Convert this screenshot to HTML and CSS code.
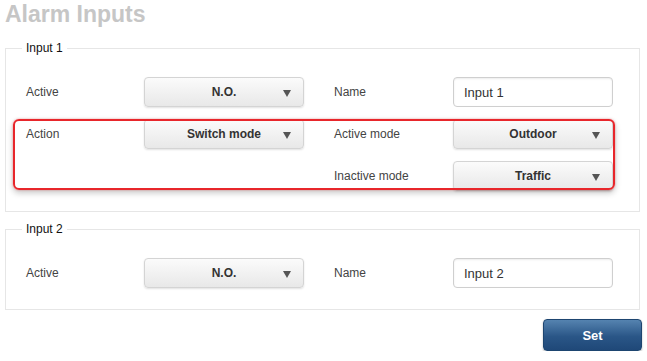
FILE: index.html
```html
<!DOCTYPE html>
<html lang="en">
<head>
    <meta charset="UTF-8">
    <title>Alarm Inputs</title>
    <link rel="stylesheet" href="styles.css">
</head>
<body>
    <div class="page">
        <h1>Alarm Inputs</h1>

        <fieldset class="group first">
            <legend>Input 1</legend>
            <div class="rows">
                <label class="lbl">Active</label>
                <div class="select"><span>N.O.</span><i class="arrow"></i></div>
                <label class="lbl">Name</label>
                <input class="text" type="text" value="Input 1">

                <label class="lbl">Action</label>
                <div class="select"><span>Switch mode</span><i class="arrow"></i></div>
                <label class="lbl">Active mode</label>
                <div class="select"><span>Outdoor</span><i class="arrow"></i></div>

                <label class="lbl col3">Inactive mode</label>
                <div class="select"><span>Traffic</span><i class="arrow"></i></div>

                <div class="highlight"></div>
            </div>
        </fieldset>

        <fieldset class="group second">
            <legend>Input 2</legend>
            <div class="rows">
                <label class="lbl">Active</label>
                <div class="select"><span>N.O.</span><i class="arrow"></i></div>
                <label class="lbl">Name</label>
                <input class="text" type="text" value="Input 2">
            </div>
        </fieldset>

        <div class="actions">
            <button type="button" class="btn-set">Set</button>
        </div>
    </div>
</body>
</html>
```

FILE: styles.css
```css
body {
    margin: 0;
    background: #fff;
    font-family: "Liberation Sans", Arial, sans-serif;
    color: #333;
}

.page {
    width: 637px;
    padding: 0 5px;
}

h1 {
    margin: 1px 0 0 0;
    font-size: 23px;
    line-height: 26px;
    font-weight: bold;
    color: #c6c6c6;
}

.group {
    margin: 14px 2px 0 0;
    padding: 22px 25px 21px 20px;
    border: 1px solid #e6e6e6;
    min-width: 0;
}

.group.first {
    padding-bottom: 20px;
}

.group.second {
    margin-top: 10px;
}

legend {
    margin-left: -4px;
    padding: 0 4px;
    font-size: 12px;
    line-height: 14px;
    color: #111;
}

.rows {
    position: relative;
    display: grid;
    grid-template-columns: 118px 190px 119px 160px;
    grid-auto-rows: 30px;
    row-gap: 12px;
}

.lbl {
    display: flex;
    align-items: center;
    font-size: 12px;
    color: #444;
}

.col3 {
    grid-column: 3;
}

.select {
    position: relative;
    display: flex;
    align-items: center;
    justify-content: center;
    box-sizing: border-box;
    width: 160px;
    height: 30px;
    border: 1px solid #d4d4d4;
    border-radius: 4px;
    background: linear-gradient(#fbfbfb, #e8e8e8);
    box-shadow: 0 1px 2px rgba(0, 0, 0, 0.12);
    font-size: 12px;
    font-weight: bold;
    color: #333;
}

.arrow {
    position: absolute;
    right: 12px;
    top: 12px;
    width: 0;
    height: 0;
    border-left: 4px solid transparent;
    border-right: 4px solid transparent;
    border-top: 7px solid #555;
}

.text {
    box-sizing: border-box;
    height: 30px;
    width: 160px;
    margin: 0;
    padding: 0 10px;
    border: 1px solid #cfcfcf;
    border-radius: 4px;
    box-shadow: inset 0 1px 2px rgba(0, 0, 0, 0.08);
    font-family: "Liberation Sans", Arial, sans-serif;
    font-size: 13px;
    color: #333;
}

.highlight {
    position: absolute;
    left: -13px;
    top: 42px;
    width: 602px;
    height: 71px;
    box-sizing: border-box;
    border: 2px solid #e8262b;
    border-radius: 6px;
    box-shadow: 0 0 2px rgba(232, 38, 43, 0.5), 0 3px 6px rgba(0, 0, 0, 0.22);
    pointer-events: none;
}

.actions {
    display: flex;
    justify-content: flex-end;
    margin-top: 9px;
}

.btn-set {
    width: 99px;
    height: 32px;
    border: 1px solid #1d4570;
    border-radius: 4px;
    background: linear-gradient(#5583b0, #2a5687 55%, #1f4878);
    box-shadow: 0 1px 2px rgba(0, 0, 0, 0.3);
    font-family: "Liberation Sans", Arial, sans-serif;
    font-size: 13px;
    font-weight: bold;
    color: #fff;
}
```
